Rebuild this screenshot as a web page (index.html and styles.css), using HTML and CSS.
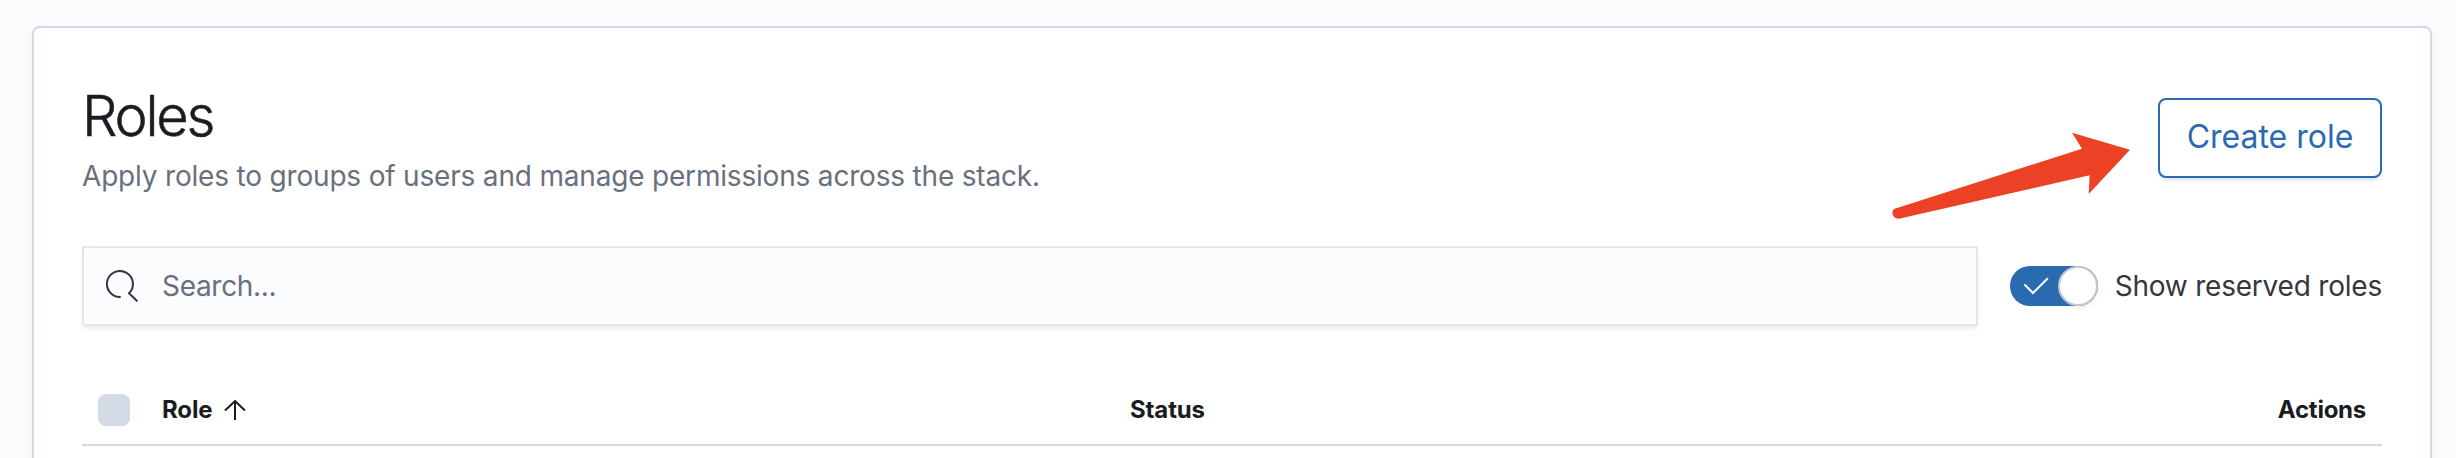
FILE: index.html
```html
<!DOCTYPE html>
<html lang="en">
<head>
<meta charset="utf-8">
<title>Roles</title>
<link rel="stylesheet" href="styles.css">
</head>
<body>
<main class="panel">
  <header class="header">
    <div>
      <h1 class="title">Roles</h1>
      <p class="subtitle">Apply roles to groups of users and manage permissions across the stack.</p>
    </div>
    <button class="create">Create role</button>
  </header>
  <div class="toolbar">
    <div class="search">
      <svg class="search-icon" viewBox="0 0 32 32" width="32" height="32"><path d="M14.700 27A13 13 0 1 1 23 23.300L31.400 31.400"/></svg>
      <span class="placeholder">Search...</span>
    </div>
    <div class="switch">
      <span class="track">
        <svg class="check" viewBox="0 0 26 18" width="26" height="18"><path d="M2 8L10 16L24.300 1.700"/></svg>
        <span class="thumb"></span>
      </span>
      <span class="switch-label">Show reserved roles</span>
    </div>
  </div>
  <div class="table-head">
    <span class="checkbox"></span>
    <span class="col-role"><span class="label">Role</span>
      <svg class="sort" viewBox="0 0 22 20" width="22" height="20"><path d="M11 20V1M1 10.500L11 1L21 10.500"/></svg>
    </span>
    <span class="label">Status</span>
    <span class="label col-actions">Actions</span>
  </div>
</main>
<svg class="pointer" viewBox="0 0 240 90" width="240" height="90"><path d="M4 79L192 18.700L182 2.700L240 19.700L198.700 64L199.600 45.300L10 88.500Q4 89.500 2.500 84Q2 80 4 79Z"/></svg>
</body>
</html>
```
FILE: styles.css
```css
* { box-sizing: border-box; }
body {
  margin: 0;
  padding: 26px 24px 0 32px;
  height: 458px;
  overflow: hidden;
  background: #fafbfd;
  color: #343741;
  font-family: Inter, "Liberation Sans", sans-serif;
  font-size: 28px;
  letter-spacing: -.0066em;
}
.panel {
  height: 432px;
  padding: 54px 48px 0;
  border: 2px solid #d3dae6;
  border-bottom: 0;
  border-radius: 8px 8px 0 0;
  background: #fff;
  box-shadow: 0 4px 8px rgba(152, 162, 179, .15);
}
.header {
  display: flex;
  justify-content: space-between;
  height: 164px;
}
.title {
  margin: 0;
  font-size: 56px;
  line-height: 68px;
  font-weight: 300;
  letter-spacing: -.04em;
  color: #1a1c21;
  -webkit-text-stroke: .5px #1a1c21;
}
.subtitle {
  margin: 5px 0 0;
  line-height: 42px;
  color: #69707d;
}
.create {
  width: 224px;
  height: 80px;
  margin-top: 16px;
  padding: 0 0 4px;
  border: 2px solid #2a6ab0;
  border-radius: 8px;
  background: #fff;
  color: #2a6ab0;
  font: inherit;
  font-size: 32px;
  letter-spacing: 0;
  box-shadow: 0 4px 4px -2px rgba(54, 97, 126, .2);
}
.toolbar {
  display: flex;
  justify-content: space-between;
  align-items: center;
  height: 80px;
}
.search {
  display: flex;
  align-items: center;
  width: 1896px;
  height: 80px;
  padding-left: 22px;
  gap: 24px;
  border: 2px solid #e3e6ef;
  background: #fbfcfe;
  color: #69707d;
  box-shadow: 0 4px 4px -2px rgba(152, 162, 179, .25);
}
.placeholder { letter-spacing: -.011em; }
.search-icon, .check, .sort { fill: none; stroke-width: 2; }
.search-icon { stroke: #343741; }
.switch {
  display: flex;
  align-items: center;
  justify-content: space-between;
  width: 372px;
}
.switch-label { letter-spacing: -.0075em; }
.track {
  display: flex;
  align-items: center;
  justify-content: space-between;
  width: 88px;
  height: 40px;
  padding-left: 13px;
  border-radius: 20px;
  background: #2a6ab0;
}
.check { stroke: #fff; stroke-linecap: round; }
.thumb {
  width: 40px;
  height: 40px;
  border: 2px solid #c5c8cc;
  border-radius: 50%;
  background: #fff;
  box-shadow: 0 4px 4px -2px rgba(152, 162, 179, .2);
}
.table-head {
  display: flex;
  align-items: center;
  height: 120px;
  padding: 50px 16px 0;
  border-bottom: 2px solid #d3dae6;
  color: #1a1c21;
  font-size: 24px;
  font-weight: 700;
  letter-spacing: -.14px;
}
.label { padding-bottom: 2px; }
.checkbox {
  width: 32px;
  height: 32px;
  border-radius: 8px;
  background: #d3dae6;
}
.col-role {
  display: flex;
  align-items: center;
  gap: 12px;
  width: 968px;
  margin-left: 32px;
}
.sort { stroke: #1a1c21; }
.col-actions { margin-left: auto; letter-spacing: -.25px; }
.pointer {
  position: absolute;
  left: 1890px;
  top: 130px;
  fill: #ed4126;
}
```
